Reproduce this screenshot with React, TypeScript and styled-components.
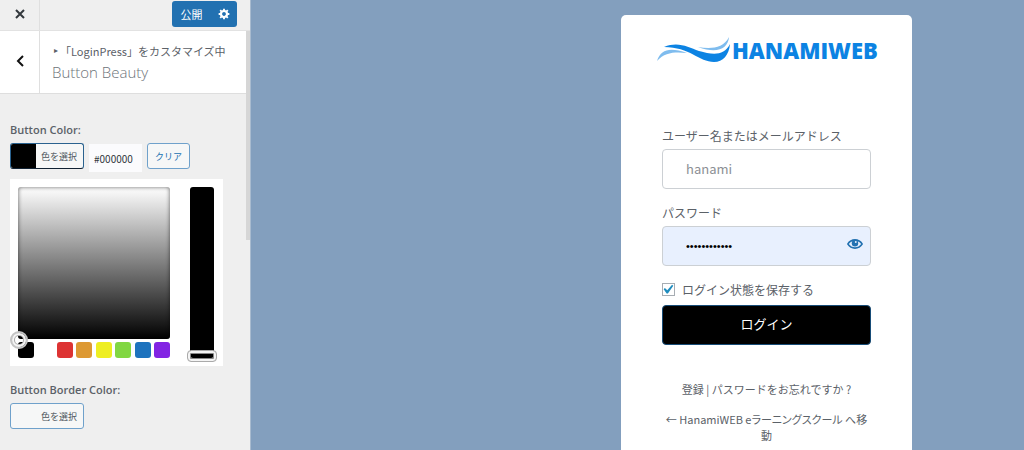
import React, { useState } from "react";
import styled, { createGlobalStyle, css } from "styled-components";

const GlobalStyle = createGlobalStyle`
  *, *::before, *::after { box-sizing: border-box; }
  body {
    margin: 0;
    background: #839fbe;
    color: #5b6168;
    font-family: "Noto Sans CJK JP", "Open Sans", sans-serif;
    font-size: 12px;
  }
  button, input { font-family: inherit; margin: 0; }
  h1, h2, p { margin: 0; font-weight: 400; }
`;

const Page = styled.div`
  display: flex;
  min-height: 100vh;
`;

/* ---------- Customizer sidebar ---------- */

const Sidebar = styled.aside`
  flex: 0 0 251px;
  display: flex;
  flex-direction: column;
  background: #efefef;
  border-right: 1px solid #a9bbcf;
`;

const TopBar = styled.header`
  display: flex;
  align-items: center;
  height: 31px;
  border-bottom: 1px solid #e2e2e2;
`;

const IconCell = styled.button`
  display: flex;
  align-items: center;
  justify-content: center;
  align-self: stretch;
  width: 40px;
  padding: 0 0 2px;
  border: 0;
  border-right: 1px solid #dfdfdf;
  background: transparent;
  color: #32373c;
`;

const PublishGroup = styled.div`
  display: flex;
  height: 26px;
  margin: 0 13px 2px auto;
  border-radius: 3px;
  overflow: hidden;
`;

const PublishButton = styled.button<{ $width: number }>`
  display: flex;
  align-items: center;
  justify-content: center;
  width: ${(p) => p.$width}px;
  padding: 0;
  border: 0;
  background: #2271b1;
  color: #fff;
  font-size: 11px;
`;

const SidebarBody = styled.div`
  flex: 1;
  display: flex;
`;

const Panel = styled.div`
  flex: 1;
`;

const ScrollTrack = styled.div`
  width: 4px;
`;

const ScrollThumb = styled.div`
  height: 209px;
  background: #d6d6d6;
`;

const SectionHead = styled.div`
  display: flex;
  height: 63px;
  background: #fff;
  border-bottom: 1px solid #dedede;
`;

const Heading = styled.div`
  padding: 10px 0 0 12px;
  white-space: nowrap;
`;

const Crumb = styled.p`
  display: flex;
  align-items: center;
  padding-left: 2px;
  font-size: 11px;
  line-height: 20px;
`;

const Arrow = styled.span`
  width: 6px;
  font-family: "DejaVu Sans", sans-serif;
  font-size: 8px;
`;

const Title = styled.h1`
  color: #6d7379;
  font-family: "Open Sans", sans-serif;
  font-size: 15px;
  line-height: 22px;
  font-weight: 300;
`;

const Controls = styled.div`
  display: flex;
  flex-direction: column;
  gap: 16px;
  padding: 28px 10px;
`;

const ControlLabel = styled.h2`
  margin-bottom: 5px;
  font-family: "Open Sans", sans-serif;
  font-size: 11px;
  line-height: 16px;
  font-weight: 600;
`;

const ControlRow = styled.div`
  display: flex;
  gap: 5px;
`;

const outlined = css`
  height: 26px;
  border: 1px solid #6fa1cb;
  border-radius: 3px;
  background: #f6f7f7;
  font-size: 9px;
`;

const SwatchButton = styled.button<{ $color?: string; $open?: boolean }>`
  ${outlined}
  display: flex;
  align-items: center;
  width: 74px;
  padding: 0;
  overflow: hidden;
  color: #50575e;
  ${(p) => p.$open && css`
    border-color: #2a628f;
    border-bottom-color: #123;
  `}
  &::before {
    content: "";
    align-self: stretch;
    width: 25px;
    margin-right: 5px;
    background: ${(p) => p.$color ?? "transparent"};
  }
`;

const HexInput = styled.input`
  width: 53px;
  height: 28px;
  margin: 1px 0 0;
  padding: 0 5px;
  border: 0;
  background: #fbfbfd;
  color: #32373c;
  font-size: 10px;
`;

const ClearButton = styled.button`
  ${outlined}
  width: 43px;
  padding: 0;
  color: #2271b1;
`;

const Picker = styled.div`
  display: flex;
  gap: 20px;
  width: 213px;
  margin-top: 7px;
  padding: 8px;
  background: #fff;
`;

const PickerMain = styled.div`
  display: flex;
  flex-direction: column;
  gap: 3px;
  width: 152px;
`;

const Saturation = styled.div`
  position: relative;
  height: 152px;
  border-radius: 3px;
  background: linear-gradient(#fff, #000);
  box-shadow: inset 0 0 4px rgba(0, 0, 0, 0.6);
`;

const Handle = styled.span`
  position: absolute;
  left: -8px;
  bottom: -10px;
  width: 18px;
  height: 18px;
  border: 2px solid #c4c4c4;
  border-radius: 50%;
  box-shadow: inset 0 0 0 2px #f4f4f4, inset 0 0 0 3px #aaa;
`;

const Palette = styled.div`
  display: flex;
  justify-content: space-between;
`;

const PaletteSwatch = styled.button<{ $color: string }>`
  width: 16px;
  height: 16px;
  padding: 0;
  border: 0;
  border-radius: 3px;
  background: ${(p) => p.$color};
`;

const Strip = styled.div`
  width: 24px;
  height: 171px;
  border-radius: 3px;
  background: #000;
`;

const StripSlider = styled.input`
  display: block;
  width: 30px;
  height: 175px;
  margin: 0 -3px;
  appearance: none;
  background: transparent;
  writing-mode: vertical-lr;
  direction: rtl;
  &::-webkit-slider-thumb {
    appearance: none;
    width: 30px;
    height: 12px;
    border: 1px solid #aaa;
    border-radius: 4px;
    background: transparent;
    box-shadow: inset 0 0 0 2px #f4f4f4, inset 0 0 0 3px #888;
  }
`;

/* ---------- Login preview ---------- */

const Preview = styled.main`
  flex: 1;
  display: flex;
  justify-content: flex-end;
  padding: 15px 112px 0 0;
`;

const Card = styled.form`
  width: 291px;
  padding: 23px 41px 6px;
  border-radius: 5px 5px 0 0;
  background: #fff;
  text-align: center;
`;

const Logo = styled.svg`
  display: block;
  width: 221px;
  height: 28px;
  margin: 0 -6px 60px;
  overflow: visible;
`;

const Field = styled.div`
  display: flex;
  flex-direction: column;
  gap: 3px;
  margin-bottom: 14px;
  text-align: left;
`;

const FieldLabel = styled.label`
  font-size: 12px;
  line-height: 20px;
`;

const InputWrap = styled.div`
  position: relative;
`;

const TextInput = styled.input`
  display: block;
  width: 100%;
  height: 40px;
  padding: 0 23px 2px;
  border: 1px solid #ccd0d4;
  border-radius: 4px;
  background: #fff;
  color: #8c8f94;
  font-size: 13px;
  &[type="password"] {
    padding-bottom: 0;
    background: #e8f0fe;
    color: #000;
    font-family: "Liberation Sans", sans-serif;
    font-size: 11px;
  }
`;

const Reveal = styled.button`
  position: absolute;
  top: 10px;
  right: 8px;
  display: flex;
  padding: 0;
  border: 0;
  background: transparent;
  color: #2271b1;
`;

const Remember = styled.label`
  display: flex;
  align-items: center;
  gap: 7px;
  height: 20px;
  margin-bottom: 5px;
  padding-bottom: 1px;
  font-size: 12px;
`;

const Checkbox = styled.input`
  appearance: none;
  width: 13px;
  height: 13px;
  border: 1px solid #a7adb3;
  background: #fff;
  &:checked {
    background: #fff url("data:image/svg+xml,%3Csvg xmlns='http://www.w3.org/2000/svg' viewBox='4 3 14 14'%3E%3Cpath d='M14.83 4.89l1.34.94-5.81 8.38H9.02L5.78 9.67l1.34-1.25 2.57 2.4z' fill='%231e8cbe'/%3E%3C/svg%3E") center / 13px no-repeat;
  }
`;

const Submit = styled.button`
  display: block;
  width: 100%;
  height: 40px;
  padding: 0 0 4px;
  border: 1px solid #174c77;
  border-radius: 4px;
  background: #000;
  color: #fff;
  font-size: 13px;
`;

const Nav = styled.p`
  margin-top: 36px;
  font-size: 11px;
  line-height: 16px;
`;

const BackLink = styled(Nav)`
  margin-top: 14px;
  font-feature-settings: "palt";
`;

const TextLink = styled.a`
  color: inherit;
  text-decoration: none;
`;

const palette = ["#000000", "#ffffff", "#dd3333", "#dd9933", "#eeee22", "#81d742", "#1e73be", "#8224e3"];

const HanamiLogo = () => (
  <Logo viewBox="0 0 221 28" role="img" aria-label="HANAMIWEB">
    <path d="M1 23C5 11 14 9 31 15C19 14 9 14 1 23Z" fill="#7fbcee" />
    <path d="M8 9C22 3 32 9 43 13C57 17 68 18 74 6C73 17 67 24 58 24C43 24 34 9 8 9Z" fill="#0c83e3" />
    <path d="M42 9C54 11 67 11 73 -1C72 11 61 16 42 9Z" fill="#7fbcee" />
    <text x="76" y="21" fill="#0c83e3" fontFamily="Open Sans" fontWeight="800" fontSize="22">HANAMIWEB</text>
  </Logo>
);

export default function App() {
  const [hex, setHex] = useState("#000000");
  const [strip, setStrip] = useState(0);
  const [user, setUser] = useState("hanami");
  const [password, setPassword] = useState("hanamihanami");
  const [visible, setVisible] = useState(false);

  return (
    <>
      <GlobalStyle />
      <Page>
        <Sidebar>
          <TopBar>
            <IconCell aria-label="閉じる">
              <svg width="10" height="10" viewBox="0 0 10 10" fill="none" stroke="currentColor" strokeWidth="2">
                <path d="M1 1L9 9M9 1L1 9" />
              </svg>
            </IconCell>
            <PublishGroup>
              <PublishButton $width={39}>公開</PublishButton>
              <PublishButton $width={26} aria-label="公開設定">
                <svg width="12" height="12" viewBox="0 1 19 19" fill="currentColor">
                  <path d="M18 12h-2.18c-.17.7-.44 1.35-.81 1.93l1.54 1.54-2.1 2.1-1.54-1.54c-.58.36-1.23.63-1.91.79V19H8v-2.18c-.68-.16-1.33-.43-1.91-.79l-1.54 1.54-2.12-2.12 1.54-1.54c-.36-.58-.63-1.23-.79-1.91H1V9.03h2.17c.16-.7.44-1.35.8-1.94L2.43 5.55l2.1-2.1 1.54 1.54c.58-.37 1.24-.64 1.93-.81V2h3v2.18c.68.16 1.33.43 1.91.79l1.54-1.54 2.12 2.12-1.54 1.54c.36.59.64 1.24.8 1.94H18V12zm-8.5 1.5c1.66 0 3-1.34 3-3s-1.34-3-3-3-3 1.34-3 3 1.34 3 3 3z" />
                </svg>
              </PublishButton>
            </PublishGroup>
          </TopBar>
          <SidebarBody>
            <Panel>
              <SectionHead>
                <IconCell aria-label="戻る">
                  <svg width="8" height="12" viewBox="0 0 8 12" fill="none" stroke="#111" strokeWidth="2">
                    <path d="M7 1L2 6L7 11" />
                  </svg>
                </IconCell>
                <Heading>
                  <Crumb><Arrow>▸</Arrow>「LoginPress」をカスタマイズ中</Crumb>
                  <Title>Button Beauty</Title>
                </Heading>
              </SectionHead>
              <Controls>
                <section>
                  <ControlLabel>Button Color:</ControlLabel>
                  <ControlRow>
                    <SwatchButton $color="#000" $open>色を選択</SwatchButton>
                    <HexInput aria-label="Button Color" value={hex} onChange={(e) => setHex(e.target.value)} />
                    <ClearButton>クリア</ClearButton>
                  </ControlRow>
                  <Picker>
                    <PickerMain>
                      <Saturation><Handle /></Saturation>
                      <Palette>
                        {palette.map((c) => <PaletteSwatch key={c} $color={c} aria-label={c} onClick={() => setHex(c)} />)}
                      </Palette>
                    </PickerMain>
                    <Strip>
                      <StripSlider type="range" aria-label="彩度" value={strip} onChange={(e) => setStrip(Number(e.target.value))} />
                    </Strip>
                  </Picker>
                </section>
                <section>
                  <ControlLabel>Button Border Color:</ControlLabel>
                  <SwatchButton>色を選択</SwatchButton>
                </section>
              </Controls>
            </Panel>
            <ScrollTrack><ScrollThumb /></ScrollTrack>
          </SidebarBody>
        </Sidebar>
        <Preview>
          <Card onSubmit={(e) => e.preventDefault()}>
            <HanamiLogo />
            <Field>
              <FieldLabel htmlFor="user">ユーザー名またはメールアドレス</FieldLabel>
              <TextInput id="user" type="text" value={user} onChange={(e) => setUser(e.target.value)} />
            </Field>
            <Field>
              <FieldLabel htmlFor="password">パスワード</FieldLabel>
              <InputWrap>
                <TextInput id="password" type={visible ? "text" : "password"} value={password} onChange={(e) => setPassword(e.target.value)} />
                <Reveal type="button" aria-label="パスワードを表示" onClick={() => setVisible(!visible)}>
                  <svg width="16" height="16" viewBox="0 0 20 20" fill="currentColor">
                    <path d="M19.7 9.4C17.7 6 14 3.9 10 3.9S2.3 6 .3 9.4L0 10l.3.6c2 3.4 5.7 5.5 9.7 5.5s7.7-2.1 9.7-5.5l.3-.6-.3-.6zM10 14.1c-3.1 0-6-1.6-7.7-4.1C3.6 8 5.7 6.6 8 6.1c-.9.6-1.5 1.7-1.5 2.9 0 1.9 1.6 3.5 3.5 3.5s3.5-1.6 3.5-3.5c0-1.2-.6-2.3-1.5-2.9 2.3.5 4.4 1.9 5.7 3.9-1.7 2.5-4.6 4.1-7.7 4.1z" />
                    <circle cx="10" cy="9" r="4" />
                    <circle cx="11" cy="7.5" r="1.2" fill="#e8f0fe" />
                  </svg>
                </Reveal>
              </InputWrap>
            </Field>
            <Remember>
              <Checkbox type="checkbox" defaultChecked />
              ログイン状態を保存する
            </Remember>
            <Submit>ログイン</Submit>
            <Nav>
              <TextLink href="#register">登録</TextLink> | <TextLink href="#lost">パスワードをお忘れですか ?</TextLink>
            </Nav>
            <BackLink>
              <TextLink href="#home">← HanamiWEB eラーニングスクール へ移動</TextLink>
            </BackLink>
          </Card>
        </Preview>
      </Page>
    </>
  );
}
